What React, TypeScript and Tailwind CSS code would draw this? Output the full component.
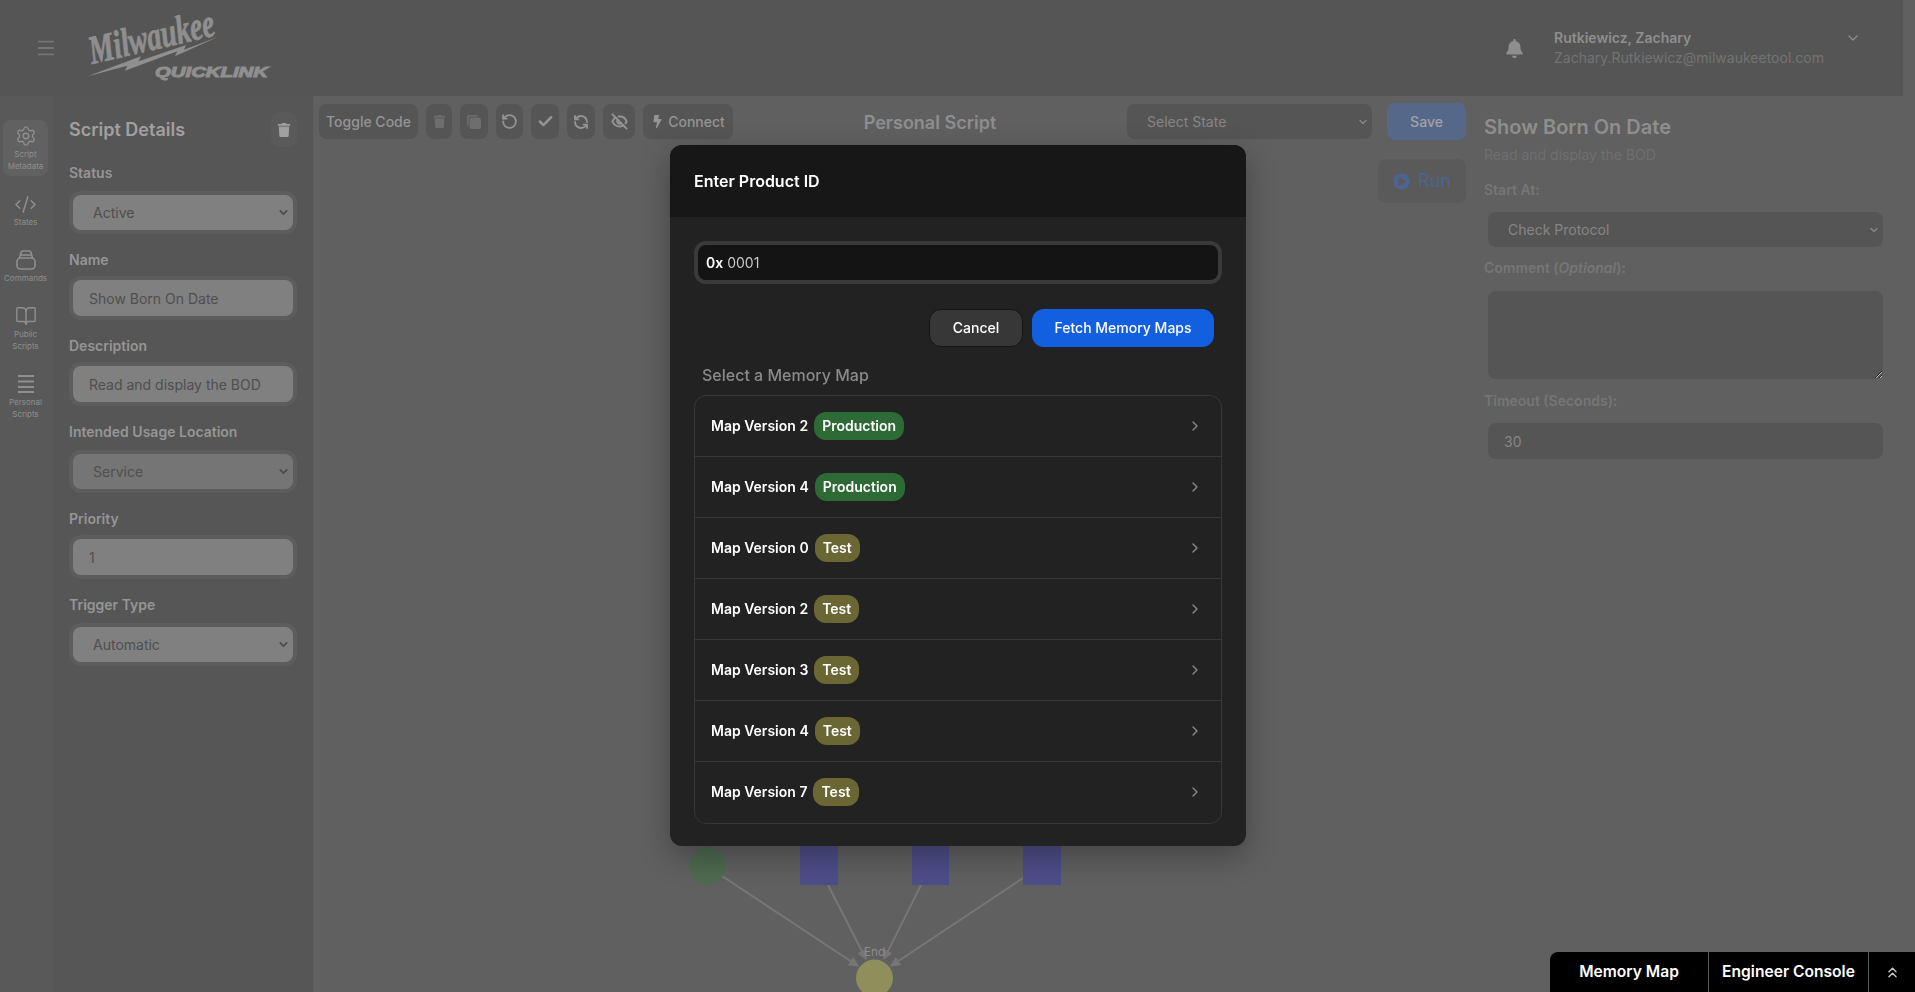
import { BookOpen, Check, ChevronDown, ChevronRight, ChevronsUp, CodeXml, EyeOff, Menu, RefreshCcw, RotateCcw, Settings } from 'lucide-react';
import { FaBell, FaBolt, FaPlayCircle, FaTrash } from 'react-icons/fa';
import { IoCopy } from 'react-icons/io5';

const maps = [
  { name: 'Map Version 2', tag: 'Production' },
  { name: 'Map Version 4', tag: 'Production' },
  { name: 'Map Version 0', tag: 'Test' },
  { name: 'Map Version 2', tag: 'Test' },
  { name: 'Map Version 3', tag: 'Test' },
  { name: 'Map Version 4', tag: 'Test' },
  { name: 'Map Version 7', tag: 'Test' },
];

function CommandsIcon() {
  return (
    <svg width="20" height="20" viewBox="0 0 20 20" fill="none" stroke="currentColor" strokeWidth="1.6">
      <rect x="1" y="8" width="18" height="11" rx="3.5" />
      <path d="M3.5 8 L5 2.5 Q5.4 1 7 1 H13 Q14.6 1 15 2.5 L16.5 8" />
      <path d="M4 5 H16" />
    </svg>
  );
}

function StackIcon() {
  return (
    <svg width="18" height="20" viewBox="0 0 18 20" fill="none" stroke="currentColor" strokeWidth="2">
      <path d="M1 2 H17 M1 7.5 H17 M1 13 H17 M1 18 H17" />
    </svg>
  );
}

function RailItem({ icon, lines, active }: { icon: React.ReactNode; lines: string[]; active?: boolean }) {
  return (
    <div className={`mx-[3px] flex w-[45px] flex-col items-center rounded-lg pt-[6px] pb-1 text-[#8f8f8f] ${active ? 'bg-[#616161]' : ''}`}>
      <div className="flex h-5 items-center justify-center">{icon}</div>
      <div className="mt-[2px] text-center text-[8px] leading-3 whitespace-nowrap">
        {lines.map((l) => (
          <div key={l}>{l}</div>
        ))}
      </div>
    </div>
  );
}

function BoxSelect({ value, dim }: { value: string; dim?: boolean }) {
  return (
    <div className="relative mt-2 h-[43px] rounded-xl bg-[#5d5d5d] p-1">
      <select
        defaultValue={value}
        className={`h-[35px] w-full appearance-none rounded-lg pl-5 text-sm text-[#4f4f4f] outline-none ${dim ? 'bg-[#757575]' : 'bg-[#808080]'}`}
      >
        <option>{value}</option>
      </select>
      <ChevronDown size={13} strokeWidth={3} className="absolute top-[15px] right-[7px] text-[#4a4a4a]" />
    </div>
  );
}

function BoxInput({ value }: { value: string }) {
  return (
    <div className="mt-[6px] h-[44px] rounded-xl bg-[#5d5d5d] p-1">
      <input
        readOnly
        value={value}
        className="h-9 w-full rounded-lg bg-[#808080] px-4 text-sm text-[#4f4f4f] outline-none"
      />
    </div>
  );
}

function Label({ children }: { children: React.ReactNode }) {
  return <div className="mt-4 text-sm leading-5 font-semibold text-[#959595]">{children}</div>;
}

function ToolButton({ children, w, dim }: { children: React.ReactNode; w: string; dim?: boolean }) {
  return (
    <div className={`flex h-[35px] items-center justify-center rounded-lg bg-[#555555] ${w} ${dim ? 'text-[#6e6e6e]' : 'text-[#949494]'}`}>
      {children}
    </div>
  );
}

function Logo() {
  return (
    <svg width="200" height="80" viewBox="0 -14 200 80" className="block text-[#8f8f8f]">
      <text
        x="5"
        y="48"
        fill="currentColor"
        stroke="currentColor"
        strokeWidth="0.8"
        fontFamily="Liberation Serif"
        fontWeight="700"
        fontStyle="italic"
        fontSize="40"
        textLength="128"
        lengthAdjust="spacingAndGlyphs"
        transform="rotate(-13 5 48)"
      >
        Milwaukee
      </text>
      <polygon
        fill="currentColor"
        points="-0.3,60.7 54,40.3 51.7,45.3 99,29 97,33.7 131.3,20.7 88,40.3 90.3,35.3 38,54.7 40.3,49.7"
      />
      <text
        x="68"
        y="60.5"
        fill="currentColor"
        stroke="currentColor"
        strokeWidth="1"
        fontFamily="Liberation Sans"
        fontWeight="700"
        fontStyle="italic"
        fontSize="15"
        textLength="113"
        lengthAdjust="spacingAndGlyphs"
      >
        QUICKLINK
      </text>
    </svg>
  );
}

function FlowDiagram() {
  return (
    <svg width="1915" height="992" className="absolute top-0 left-0">
      <defs>
        <marker id="tip" markerWidth="5" markerHeight="5" refX="4.5" refY="2.5" orient="auto">
          <path d="M0 0 L5 2.5 L0 5 Z" fill="#767676" />
        </marker>
      </defs>
      <g stroke="#767676" strokeWidth="2">
        <line x1="722" y1="876" x2="858" y2="966" markerEnd="url(#tip)" />
        <line x1="828" y1="885" x2="866" y2="959" markerEnd="url(#tip)" />
        <line x1="921" y1="885" x2="884" y2="959" markerEnd="url(#tip)" />
        <line x1="1023" y1="878" x2="891" y2="966" markerEnd="url(#tip)" />
      </g>
      <circle cx="707.5" cy="866" r="18.5" fill="#4e6a50" />
      <rect x="800" y="840" width="38" height="45" fill="#4e4d88" />
      <rect x="912" y="840" width="37" height="45" fill="#4e4d88" />
      <rect x="1023" y="840" width="38" height="45" fill="#4e4d88" />
      <circle cx="874.5" cy="978" r="18.5" fill="#8f8f5c" />
      <text x="874.5" y="956" textAnchor="middle" fontSize="12" fill="#8c8c8c" fontFamily="Inter">
        End
      </text>
    </svg>
  );
}

export default function App() {
  return (
    <div className='relative h-screen w-screen overflow-hidden bg-[#606060] font-[Inter,"Liberation_Sans",sans-serif]'>
      <header className="flex h-24 w-[1903px] items-center bg-[#555555]">
        <Menu size={22} strokeWidth={2} className="ml-[35px] text-[#757575]" />
        <div className="mt-[-12px] ml-[30px]">
          <Logo />
        </div>
        <FaBell size={19} className="ml-auto text-[#8e8e8e]" />
        <div className="ml-[30px] w-[291px]">
          <div className="text-sm leading-5 font-semibold text-[#8e8e8e]">Rutkiewicz, Zachary</div>
          <div className="text-sm leading-5 text-[#737373]">Zachary.Rutkiewicz@milwaukeetool.com</div>
        </div>
        <ChevronDown size={16} className="mr-[42px] mb-[20px] text-[#8e8e8e]" />
      </header>

      <div className="flex h-[896px]">
        <nav className="flex w-[53px] flex-col gap-3 bg-[#595959] pt-6">
          <RailItem active icon={<Settings size={22} strokeWidth={1.5} />} lines={['Script', 'Metadata']} />
          <RailItem icon={<CodeXml size={23} strokeWidth={1.5} />} lines={['States']} />
          <RailItem icon={<CommandsIcon />} lines={['Commands']} />
          <RailItem icon={<BookOpen size={22} strokeWidth={1.5} />} lines={['Public', 'Scripts']} />
          <RailItem icon={<StackIcon />} lines={['Personal', 'Scripts']} />
        </nav>

        <aside className="w-[260px] bg-[#565656] px-4 pt-4">
          <div className="flex h-[35px] items-center justify-between">
            <h2 className="text-lg font-semibold text-[#a0a0a0]">Script Details</h2>
            <div className="flex h-[35px] w-[26px] items-center justify-center rounded-lg bg-[#5a5a5a] text-[#a0a0a0]">
              <FaTrash size={14} />
            </div>
          </div>
          <Label>Status</Label>
          <BoxSelect value="Active" />
          <Label>Name</Label>
          <BoxInput value="Show Born On Date" />
          <Label>Description</Label>
          <BoxInput value="Read and display the BOD" />
          <Label>Intended Usage Location</Label>
          <BoxSelect value="Service" dim />
          <Label>Priority</Label>
          <BoxInput value="1" />
          <Label>Trigger Type</Label>
          <BoxSelect value="Automatic" />
        </aside>

        <main className="w-[1153px] pt-2 pl-[6px]">
          <div className="flex items-start">
            <div className="flex gap-2">
              <ToolButton w="w-[99px]">
                <span className="text-sm font-medium">Toggle Code</span>
              </ToolButton>
              <ToolButton w="w-[26px]" dim>
                <FaTrash size={13} />
              </ToolButton>
              <ToolButton w="w-[28px]" dim>
                <IoCopy size={16} />
              </ToolButton>
              <ToolButton w="w-[27px]">
                <RotateCcw size={17} strokeWidth={2.5} />
              </ToolButton>
              <ToolButton w="w-[28px]">
                <Check size={17} strokeWidth={3.5} />
              </ToolButton>
              <ToolButton w="w-[28px]">
                <RefreshCcw size={16} strokeWidth={2.8} />
              </ToolButton>
              <ToolButton w="w-[32px]">
                <EyeOff size={17} strokeWidth={2.8} />
              </ToolButton>
              <ToolButton w="w-[90px]">
                <FaBolt size={13} />
                <span className="ml-1 text-sm font-medium">Connect</span>
              </ToolButton>
            </div>
            <h1 className="w-[404px] pt-[5px] text-center text-lg font-semibold text-[#8e8e8e]">Personal Script</h1>
            <div className="relative">
              <select defaultValue="Select State" className="h-[35px] w-[245px] appearance-none rounded-lg bg-[#555555] pl-5 text-sm text-[#858585] outline-none">
                <option>Select State</option>
              </select>
              <ChevronDown size={12} strokeWidth={3} className="absolute top-3 right-[3px] text-[#858585]" />
            </div>
            <div className="mt-[-1px] ml-[6px] flex flex-col items-end gap-[19px]">
              <div className="flex h-[37px] w-[79px] items-center justify-center rounded-lg bg-[#56688a] text-sm font-medium text-[#a2a2a2]">Save</div>
              <div className="flex h-[44px] w-[88px] items-center justify-center gap-[8px] rounded-lg bg-[#5a5a5a] text-lg text-[#4e6490]">
                <FaPlayCircle size={17} />
                Run
              </div>
            </div>
          </div>
        </main>

        <aside className="w-[449px] px-[18px] pt-[20px]">
          <h2 className="text-xl leading-[22px] font-semibold text-[#8e8e8e]">Show Born On Date</h2>
          <p className="mt-[7px] text-sm leading-5 text-[#6f6f6f]">Read and display the BOD</p>
          <div className="mt-[15px] text-sm leading-5 font-semibold text-[#767676]">Start At:</div>
          <div className="relative mt-3 ml-1 w-[395px]">
            <select defaultValue="Check Protocol" className="block h-[35px] w-full appearance-none rounded-lg bg-[#555555] pl-5 text-sm text-[#858585] outline-none">
              <option>Check Protocol</option>
            </select>
            <ChevronDown size={12} strokeWidth={3} className="absolute top-3 right-[3px] text-[#858585]" />
          </div>
          <div className="mt-[11px] text-sm leading-5 font-semibold text-[#767676]">
            Comment (<em>Optional</em>):
          </div>
          <textarea readOnly className="mt-[13px] ml-1 block h-[88px] w-[395px] rounded-lg bg-[#555555] outline-none" />
          <div className="mt-[12px] text-sm leading-5 font-semibold text-[#767676]">Timeout (Seconds):</div>
          <input readOnly value="30" className="mt-3 ml-1 block h-9 w-[395px] rounded-lg bg-[#555555] px-4 text-sm text-[#858585] outline-none" />
        </aside>
      </div>

      <FlowDiagram />

      <div className="fixed inset-0 flex justify-center pt-[145px] pl-px">
        <div className="h-[701px] w-[576px] overflow-hidden rounded-xl bg-[#222222] shadow-[0_10px_30px_rgba(0,0,0,0.3)]">
          <div className="flex h-[72px] items-center bg-[#171717] px-6 text-base font-semibold text-white">Enter Product ID</div>
          <div className="px-6 pt-6">
            <div className="flex h-[43px] items-center rounded-xl border-4 border-[#3a3a3a] bg-[#141414] px-[8px] text-sm">
              <span className="font-semibold text-white">0x</span>
              <span className="ml-1 text-[#c8c8c8]">0001</span>
            </div>
            <div className="mt-[25px] mr-[8px] flex justify-end gap-[9px]">
              <div className="flex h-[38px] w-[94px] items-center justify-center rounded-xl border border-[#141414] bg-[#373737] text-sm font-medium text-white">Cancel</div>
              <div className="flex h-[38px] w-[182px] items-center justify-center rounded-xl bg-[#1260e0] text-sm font-medium text-white">Fetch Memory Maps</div>
            </div>
            <div className="mt-4 pl-2 text-base leading-6 font-medium text-[#8a8a8a]">Select a Memory Map</div>
            <div className="mt-2 divide-y divide-[#373737] rounded-xl border border-[#373737]">
              {maps.map((m, i) => (
                <div key={i} className="flex h-[60.95px] items-center pr-[18px] pl-4">
                  <span className="text-sm font-semibold text-white">{m.name}</span>
                  <span
                    className={`ml-[6px] flex h-7 items-center rounded-xl px-2 text-sm font-semibold text-white ${m.tag === 'Production' ? 'bg-[#2d6a35]' : 'bg-[#6b6735]'}`}
                  >
                    {m.tag}
                  </span>
                  <ChevronRight size={16} className="ml-auto text-[#8a8a8a]" />
                </div>
              ))}
            </div>
          </div>
        </div>
      </div>

      <div className="fixed right-0 bottom-0 flex h-10 w-[365px] items-stretch rounded-tl-lg bg-black text-[15.6px] font-semibold text-white">
        <div className="flex w-[159px] items-center justify-center border-r border-[#5a5a5a]">Memory Map</div>
        <div className="flex w-[160px] items-center justify-center border-r border-[#5a5a5a]">Engineer Console</div>
        <div className="flex flex-1 items-center justify-center">
          <ChevronsUp size={17} className="text-[#c8c8c8]" />
        </div>
      </div>
    </div>
  );
}
